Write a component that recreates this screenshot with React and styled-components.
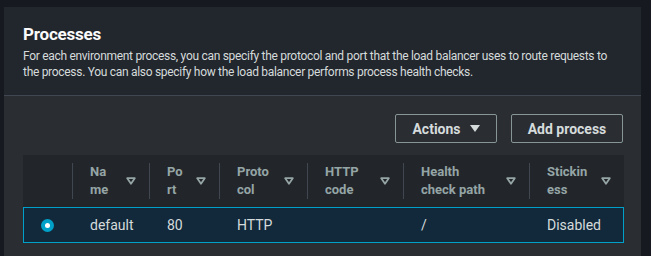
import React from 'react';
import styled, { createGlobalStyle } from 'styled-components';

const GlobalStyle = createGlobalStyle`
  html, body {
    margin: 0;
    background: #16191f;
  }
  body {
    font-family: Roboto, "Liberation Sans", Arial, sans-serif;
    color: #d5dbdb;
  }
`;

const COLUMNS = '49px 77px 70px 88px 96px 126px 95px';

const Page = styled.div`
  height: 256px;
  box-sizing: border-box;
  padding: 7px 10px 0 4px;
  overflow: hidden;
`;

const Panel = styled.section`
  height: 100%;
  background: #2a2e33;
`;

const PanelHeader = styled.header`
  height: 89px;
  box-sizing: border-box;
  padding: 16px 19px 0;
  background: #22262d;
  border-bottom: 1px solid #414750;
`;

const Title = styled.h2`
  margin: 0;
  font-size: 17px;
  line-height: 22px;
  font-weight: 700;
  color: #fafafa;
  letter-spacing: -0.2px;
`;

const Description = styled.p`
  margin: 3px 0 0;
  font-size: 12px;
  line-height: 16px;
  letter-spacing: -0.3px;
  color: #d5dbdb;
`;

const PanelBody = styled.div`
  padding: 18px 17px 0 19px;
`;

const Toolbar = styled.div`
  display: flex;
  justify-content: flex-end;
  gap: 14px;
  padding-right: 1px;
`;

const Button = styled.button`
  width: ${p => p.$width}px;
  height: 29px;
  display: flex;
  align-items: center;
  justify-content: center;
  gap: 9px;
  padding: 0;
  background: transparent;
  border: 1px solid #879596;
  border-radius: 2px;
  color: #d5dbdb;
  font-family: inherit;
  font-size: 14px;
  font-weight: 700;
  cursor: pointer;
`;

const Table = styled.div`
  margin-top: 12px;
  width: 601px;
`;

const HeadRow = styled.div`
  display: grid;
  grid-template-columns: ${COLUMNS};
  height: 52px;
  align-items: center;
  background: #22252a;
`;

const HeadCell = styled.div`
  height: 36px;
  display: flex;
  align-items: center;
  gap: 11px;
  padding: 0 13px 0 17px;
  border-left: ${p => (p.$first ? 'none' : '1px solid #414750')};
`;

const HeadLabel = styled.span`
  flex: 1;
  min-width: 0;
  overflow-wrap: anywhere;
  font-size: 13px;
  line-height: 18px;
  font-weight: 700;
  color: #95a5a6;
`;

const DataRow = styled.div`
  display: grid;
  grid-template-columns: ${COLUMNS};
  height: 36px;
  align-items: center;
  background: #12293b;
  box-shadow: inset 0 0 0 1px #00a1c9;
`;

const DataCell = styled.div`
  padding-left: ${p => (p.$center ? 0 : 18)}px;
  display: flex;
  justify-content: ${p => (p.$center ? 'center' : 'flex-start')};
  font-size: 14px;
  color: #d5dbdb;
  white-space: nowrap;
`;

const Radio = styled.span`
  width: 13px;
  height: 13px;
  border-radius: 50%;
  background: #00a1c9;
  display: flex;
  align-items: center;
  justify-content: center;
  &::after {
    content: '';
    width: 5px;
    height: 5px;
    border-radius: 50%;
    background: #fff;
  }
`;

function SortIcon() {
  return (
    <svg width="10" height="8" viewBox="0 0 10 8" style={{ flex: 'none' }}>
      <path d="M1.2 1.2 H8.8 L5 6.8 Z" fill="none" stroke="#95a5a6" strokeWidth="1.8" strokeLinejoin="round" />
    </svg>
  );
}

function Caret() {
  return (
    <svg width="10" height="7" viewBox="0 0 10 7">
      <path d="M0 0 H10 L5 7 Z" fill="#d5dbdb" />
    </svg>
  );
}

const headers = ['Name', 'Port', 'Protocol', 'HTTP code', 'Health check path', 'Stickiness'];
const processes = [
  { name: 'default', port: '80', protocol: 'HTTP', code: '', path: '/', stickiness: 'Disabled' },
];

export default function App() {
  return (
    <Page>
      <GlobalStyle />
      <Panel>
        <PanelHeader>
          <Title>Processes</Title>
          <Description>
            For each environment process, you can specify the protocol and port that the load balancer uses to route
            requests to the process. You can also specify how the load balancer performs process health checks.
          </Description>
        </PanelHeader>
        <PanelBody>
          <Toolbar>
            <Button $width={102}>
              Actions <Caret />
            </Button>
            <Button $width={112}>Add process</Button>
          </Toolbar>
          <Table>
            <HeadRow>
              <HeadCell $first />
              {headers.map(h => (
                <HeadCell key={h}>
                  <HeadLabel>{h}</HeadLabel>
                  <SortIcon />
                </HeadCell>
              ))}
            </HeadRow>
            {processes.map(p => (
              <DataRow key={p.name}>
                <DataCell $center>
                  <Radio />
                </DataCell>
                <DataCell>{p.name}</DataCell>
                <DataCell>{p.port}</DataCell>
                <DataCell>{p.protocol}</DataCell>
                <DataCell>{p.code}</DataCell>
                <DataCell>{p.path}</DataCell>
                <DataCell>{p.stickiness}</DataCell>
              </DataRow>
            ))}
          </Table>
        </PanelBody>
      </Panel>
    </Page>
  );
}
